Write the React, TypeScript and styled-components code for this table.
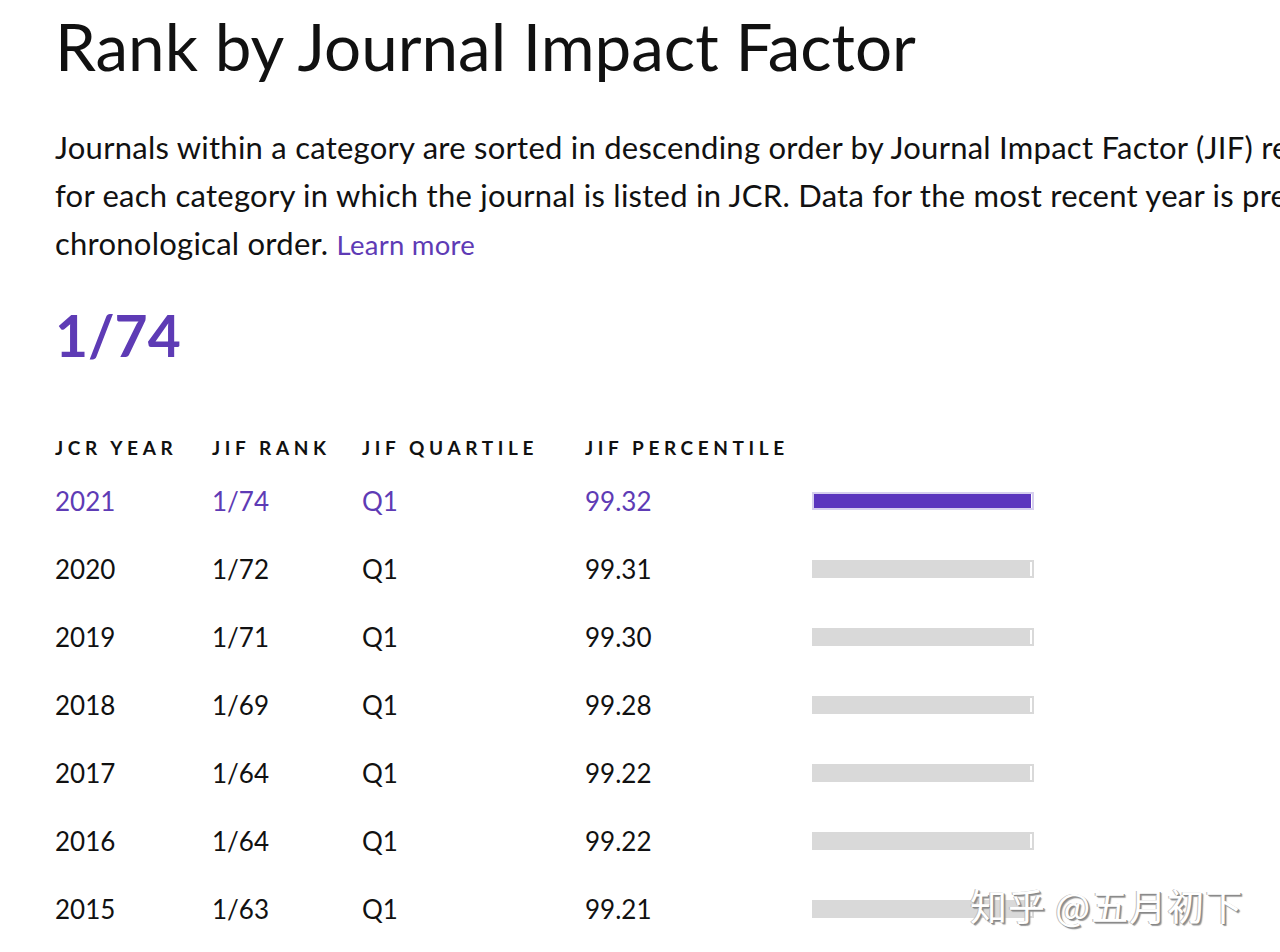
import React from "react";
import styled, { createGlobalStyle } from "styled-components";

const Global = createGlobalStyle`
  html, body { margin: 0; padding: 0; background: #ffffff; }
  body { overflow: hidden; width: 1280px; height: 952px; }
`;

const PURPLE = "#5e3bb5";

const Page = styled.div`
  position: relative;
  width: 1280px;
  height: 952px;
  overflow: hidden;
  padding-left: 55px;
  box-sizing: border-box;
  font-family: Lato, "Noto Sans", sans-serif;
  color: #111111;
`;

const Title = styled.h1`
  margin: 6px 0 0 0;
  font-size: 65.5px;
  font-weight: 400;
  line-height: 80px;
  white-space: nowrap;
`;

const Intro = styled.p`
  margin: 37px 0 0 0;
  font-size: 31px;
  letter-spacing: 0.25px;
  line-height: 48px;
  white-space: nowrap;
`;

const Learn = styled.a`
  color: ${PURPLE};
  font-size: 27.5px;
  text-decoration: none;
`;

const BigRank = styled.div`
  margin-top: 26px;
  font-size: 57px;
  font-weight: 700;
  line-height: 80px;
  color: ${PURPLE};
`;

const Table = styled.div`
  margin-top: 57px;
  display: grid;
  grid-template-columns: 157px 150px 223px 227px 222px;
`;

const HeadCell = styled.div`
  font-size: 19px;
  font-weight: 700;
  letter-spacing: 4.6px;
  line-height: 32px;
  white-space: nowrap;
  padding-bottom: 3px;
`;

const Cell = styled.div<{ $active?: boolean }>`
  font-size: 26px;
  line-height: 68px;
  height: 68px;
  color: ${(p) => (p.$active ? PURPLE : "#111111")};
  white-space: nowrap;
`;

const BarCell = styled.div`
  height: 68px;
  display: flex;
  align-items: center;
`;

const Track = styled.div<{ $active?: boolean }>`
  width: 222px;
  height: 18px;
  box-sizing: border-box;
  border: 2px solid ${(p) => (p.$active ? "#d6cfee" : "#d9d9d9")};
  background: #ffffff;
  display: flex;
`;

const Fill = styled.div<{ $active?: boolean }>`
  height: 100%;
  background: ${(p) => (p.$active ? "#5b35be" : "#d9d9d9")};
`;

const Watermark = styled.div`
  position: absolute;
  left: 970px;
  top: 878px;
  font-family: "Noto Sans CJK SC", sans-serif;
  font-size: 37px;
  color: #ffffff;
  letter-spacing: 1px;
  text-shadow: 1px 1px 0 #888, -1px 0 0 #bbb, 2px 2px 1px #999;
  white-space: nowrap;
`;

const rows = [
  { year: "2021", rank: "1/74", q: "Q1", pct: "99.32" },
  { year: "2020", rank: "1/72", q: "Q1", pct: "99.31" },
  { year: "2019", rank: "1/71", q: "Q1", pct: "99.30" },
  { year: "2018", rank: "1/69", q: "Q1", pct: "99.28" },
  { year: "2017", rank: "1/64", q: "Q1", pct: "99.22" },
  { year: "2016", rank: "1/64", q: "Q1", pct: "99.22" },
  { year: "2015", rank: "1/63", q: "Q1", pct: "99.21" },
];

export default function App() {
  return (
    <Page>
      <Global />
      <Title>Rank by Journal Impact Factor</Title>
      <Intro>
        Journals within a category are sorted in descending order by Journal Impact Factor (JIF) resulting in the Category Ranking below. A separate rank is shown
        <br />
        for each category in which the journal is listed in JCR. Data for the most recent year is presented at the top of the list, with other years shown in reverse
        <br />
        chronological order. <Learn href="#">Learn more</Learn>
      </Intro>
      <BigRank>1/74</BigRank>
      <Table>
        <HeadCell>JCR YEAR</HeadCell>
        <HeadCell>JIF RANK</HeadCell>
        <HeadCell>JIF QUARTILE</HeadCell>
        <HeadCell>JIF PERCENTILE</HeadCell>
        <HeadCell />
        {rows.map((r, i) => {
          const active = i === 0;
          return (
            <React.Fragment key={r.year}>
              <Cell $active={active}>{r.year}</Cell>
              <Cell $active={active}>{r.rank}</Cell>
              <Cell $active={active}>{r.q}</Cell>
              <Cell $active={active}>{r.pct}</Cell>
              <BarCell>
                <Track $active={active}>
                  <Fill $active={active} style={{ width: `${parseFloat(r.pct)}%` }} />
                </Track>
              </BarCell>
            </React.Fragment>
          );
        })}
      </Table>
      <Watermark>知乎 @五月初下</Watermark>
    </Page>
  );
}
